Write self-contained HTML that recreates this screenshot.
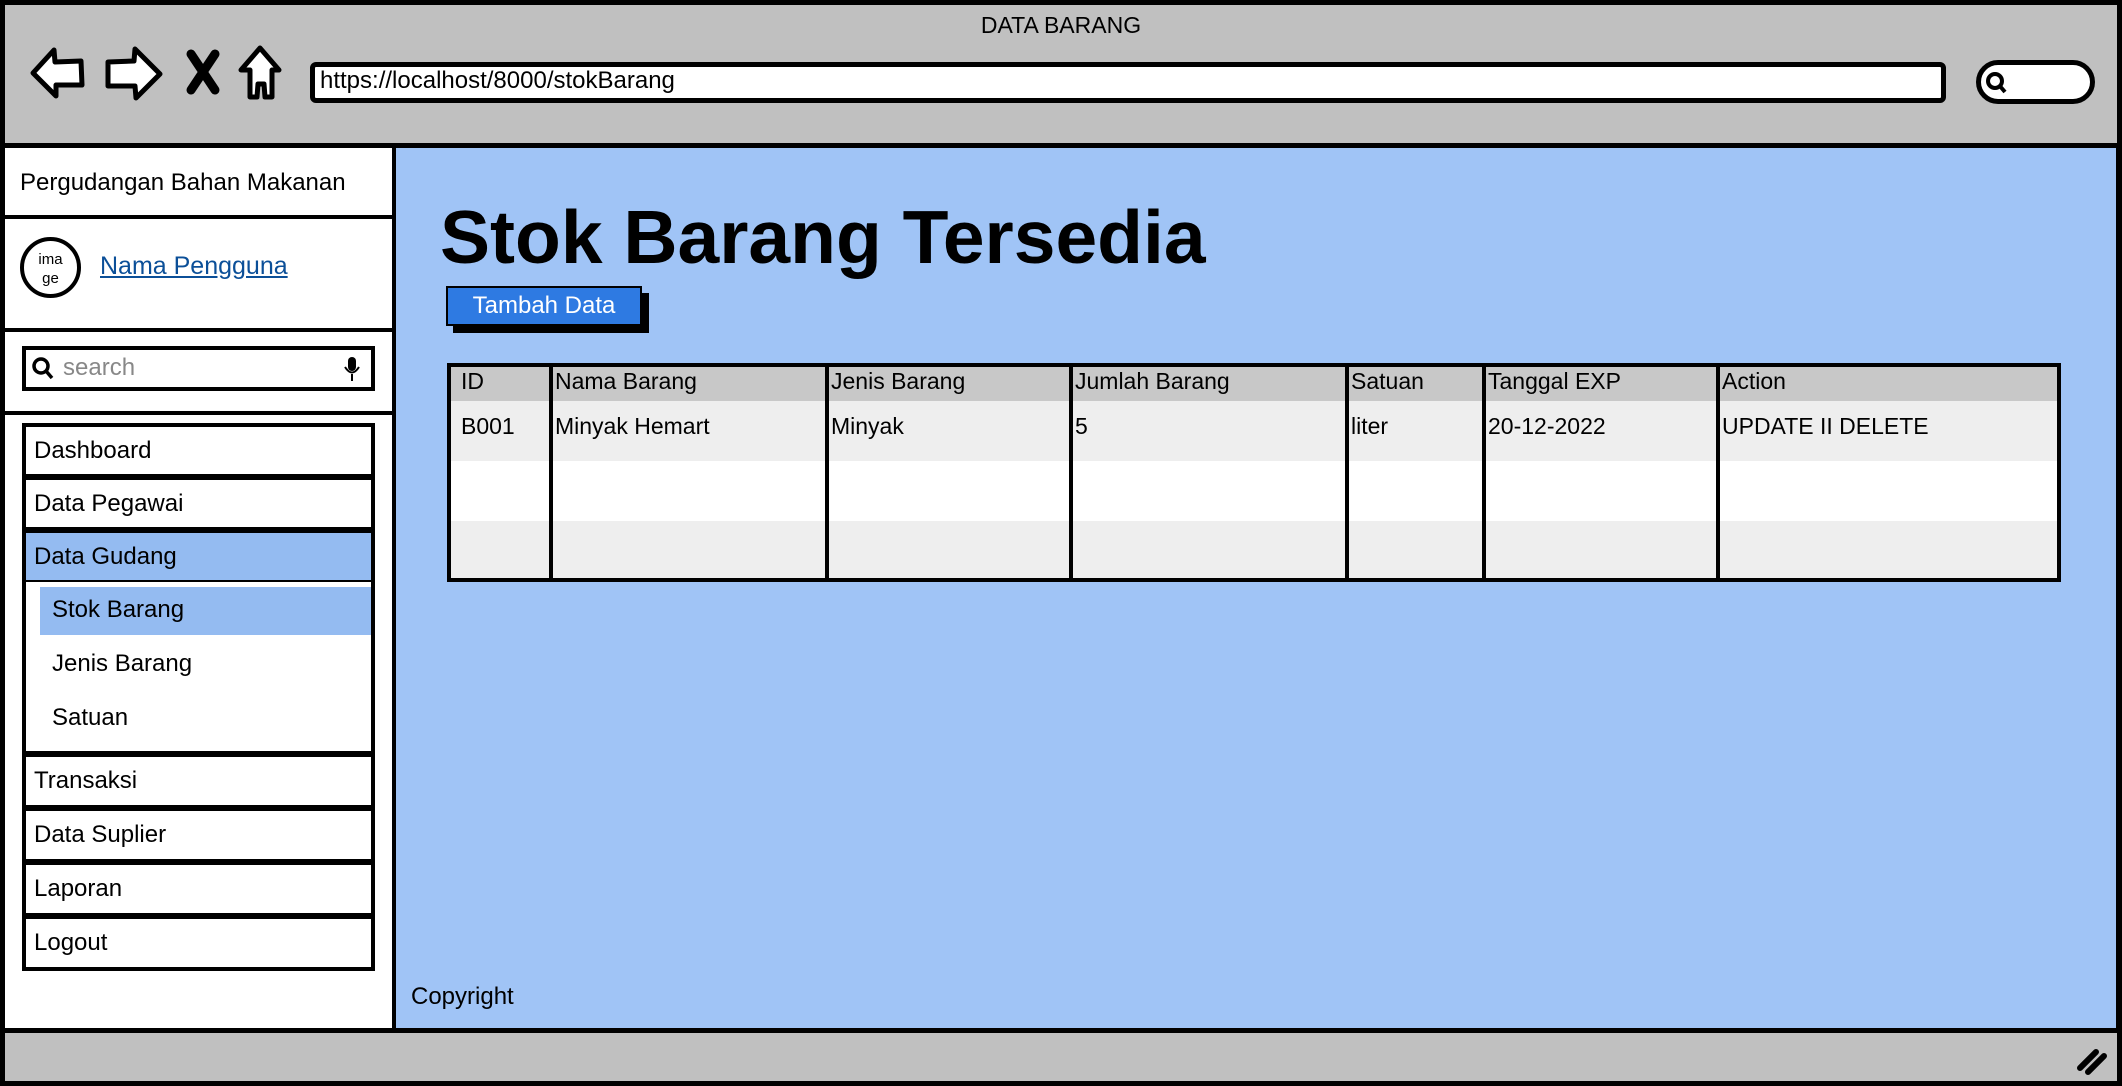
<!DOCTYPE html>
<html><head><meta charset="utf-8"><style>
*{margin:0;padding:0;box-sizing:border-box}
body{width:2122px;height:1086px;background:#fff;position:relative;overflow:hidden;font-family:"Liberation Sans",sans-serif;color:#000}
.a{position:absolute}
.t{position:absolute;white-space:nowrap}
.menu{position:absolute;left:22px;width:353px;border:4px solid #000;background:#fff;font-size:24px;padding-left:8px;display:flex;align-items:center}
.tbl{position:absolute;left:447px;top:363px;width:1614px;height:219px;border:4px solid #000;overflow:hidden}
.vl{position:absolute;top:0;bottom:0;width:4px;background:#000}
.th{position:absolute;top:1px;font-size:23px}
.td{position:absolute;top:46px;font-size:23px}
</style></head><body>
<!-- top bar -->
<div class="a" style="left:0;top:0;width:2122px;height:148px;background:#c0c0c0;border:5px solid #000;border-bottom:5px solid #000"></div>
<div class="t" style="left:0;width:2122px;text-align:center;top:12px;font-size:23px">DATA BARANG</div>
<svg class="a" style="left:28px;top:44px" width="265" height="60" viewBox="0 0 265 60">
<path d="M5 29 L26 6 L27 18 L53 17 L54 41 L28 41 L28 52 Z" fill="#fff" stroke="#000" stroke-width="5" stroke-linejoin="round"/>
<path d="M80 18 L106 17 L107 5 L132 30 L108 54 L107 42 L80 42 Z" fill="#fff" stroke="#000" stroke-width="5" stroke-linejoin="round"/>
<path d="M163 10 L187 46 M187 10 L163 46" stroke="#000" stroke-width="9" stroke-linecap="round"/>
<path d="M232 4 L251 26 L244 26 L244 53 L237 53 L236 40 L230 40 L229 53 L222 53 L222 26 L213 26 Z" fill="#fff" stroke="#000" stroke-width="5" stroke-linejoin="round"/>
</svg>
<div class="a" style="left:310px;top:62px;width:1636px;height:41px;background:#fff;border:5px solid #000;border-radius:6px"></div>
<div class="t" style="left:320px;top:67px;font-size:24px">https://localhost/8000/stokBarang</div>
<div class="a" style="left:1976px;top:60px;width:119px;height:44px;background:#fff;border:5px solid #000;border-radius:22px"></div>
<svg class="a" style="left:1984px;top:70px" width="26" height="26"><circle cx="11" cy="11" r="7" fill="none" stroke="#000" stroke-width="4"/><line x1="15" y1="15" x2="21" y2="22" stroke="#000" stroke-width="4"/></svg>
<!-- content -->
<div class="a" style="left:0;top:148px;width:2122px;height:885px;border-left:5px solid #000;border-right:6px solid #000;background:#a0c4f6"></div>
<!-- sidebar -->
<div class="a" style="left:5px;top:148px;width:391px;height:884px;background:#fff;border-right:4px solid #000"></div>
<div class="t" style="left:20px;top:169px;font-size:24px">Pergudangan Bahan Makanan</div>
<div class="a" style="left:5px;top:215px;width:391px;height:4px;background:#000"></div>
<div class="a" style="left:20px;top:237px;width:61px;height:61px;border:4px solid #000;border-radius:50%;font-size:15px;text-align:center;line-height:19px;padding-top:9px">ima<br>ge</div>
<div class="t" style="left:100px;top:252px;font-size:25px;color:#0b4f98;text-decoration:underline">Nama Pengguna</div>
<div class="a" style="left:5px;top:328px;width:391px;height:4px;background:#000"></div>
<div class="a" style="left:22px;top:346px;width:353px;height:45px;border:4px solid #000;background:#fff"></div>
<svg class="a" style="left:30px;top:355px" width="26" height="28"><circle cx="11" cy="11" r="7" fill="none" stroke="#000" stroke-width="3.5"/><line x1="16" y1="16" x2="22" y2="23" stroke="#000" stroke-width="3.5"/></svg>
<div class="t" style="left:63px;top:354px;font-size:24px;color:#888">search</div>
<svg class="a" style="left:343px;top:356px" width="18" height="26"><rect x="5" y="1" width="8" height="14" rx="4" fill="#000"/><path d="M2 11 Q9 22 16 11" fill="none" stroke="#000" stroke-width="2"/><line x1="9" y1="18" x2="9" y2="25" stroke="#000" stroke-width="2"/></svg>
<div class="a" style="left:5px;top:411px;width:391px;height:4px;background:#000"></div>
<div class="menu" style="top:423px;height:55px">Dashboard</div>
<div class="menu" style="top:476px;height:55px">Data Pegawai</div>
<div class="menu" style="top:529px;height:55px;background:#94bbf1">Data Gudang</div>
<div class="a" style="left:22px;top:582px;width:353px;height:173px;border:4px solid #000;border-top:0;background:#fff"></div>
<div class="a" style="left:40px;top:587px;width:331px;height:48px;background:#94bbf1"></div>
<div class="t" style="left:52px;top:596px;font-size:24px">Stok Barang</div>
<div class="t" style="left:52px;top:650px;font-size:24px">Jenis Barang</div>
<div class="t" style="left:52px;top:704px;font-size:24px">Satuan</div>
<div class="menu" style="top:753px;height:56px">Transaksi</div>
<div class="menu" style="top:807px;height:56px">Data Suplier</div>
<div class="menu" style="top:861px;height:56px">Laporan</div>
<div class="menu" style="top:915px;height:56px">Logout</div>
<!-- main -->
<div class="t" style="left:440px;top:192px;font-size:75px;font-weight:bold;line-height:90px">Stok Barang Tersedia</div>
<div class="a" style="left:453px;top:293px;width:196px;height:40px;background:#000"></div>
<div class="a" style="left:446px;top:286px;width:196px;height:40px;background:#2e7ae2;border:2px solid #000;color:#fff;font-size:24px;text-align:center;line-height:36px">Tambah Data</div>
<div class="tbl">
<div class="a" style="left:0;top:0;width:100%;height:34px;background:#c8c8c8"></div>
<div class="a" style="left:0;top:34px;width:100%;height:60px;background:#eee"></div>
<div class="a" style="left:0;top:94px;width:100%;height:60px;background:#fff"></div>
<div class="a" style="left:0;top:154px;width:100%;height:65px;background:#eee"></div>
<div class="vl" style="left:98px"></div><div class="vl" style="left:374px"></div><div class="vl" style="left:618px"></div><div class="vl" style="left:894px"></div><div class="vl" style="left:1031px"></div><div class="vl" style="left:1265px"></div>
<div class="th" style="left:10px">ID</div><div class="th" style="left:104px">Nama Barang</div><div class="th" style="left:380px">Jenis Barang</div><div class="th" style="left:624px">Jumlah Barang</div><div class="th" style="left:900px">Satuan</div><div class="th" style="left:1037px">Tanggal EXP</div><div class="th" style="left:1271px">Action</div>
<div class="td" style="left:10px">B001</div><div class="td" style="left:104px">Minyak Hemart</div><div class="td" style="left:380px">Minyak</div><div class="td" style="left:624px">5</div><div class="td" style="left:900px">liter</div><div class="td" style="left:1037px">20-12-2022</div><div class="td" style="left:1271px">UPDATE II DELETE</div>
</div>
<div class="t" style="left:411px;top:983px;font-size:24px">Copyright</div>
<!-- bottom bar -->
<div class="a" style="left:0;top:1028px;width:2122px;height:58px;background:#c0c0c0;border:5px solid #000;border-top:5px solid #000"></div>
<svg class="a" style="left:2076px;top:1046px" width="34" height="30"><path d="M4 22 L20 6" stroke="#000" stroke-width="6" stroke-linecap="round"/><path d="M12 26 L28 10" stroke="#000" stroke-width="6" stroke-linecap="round"/></svg>
</body></html>
